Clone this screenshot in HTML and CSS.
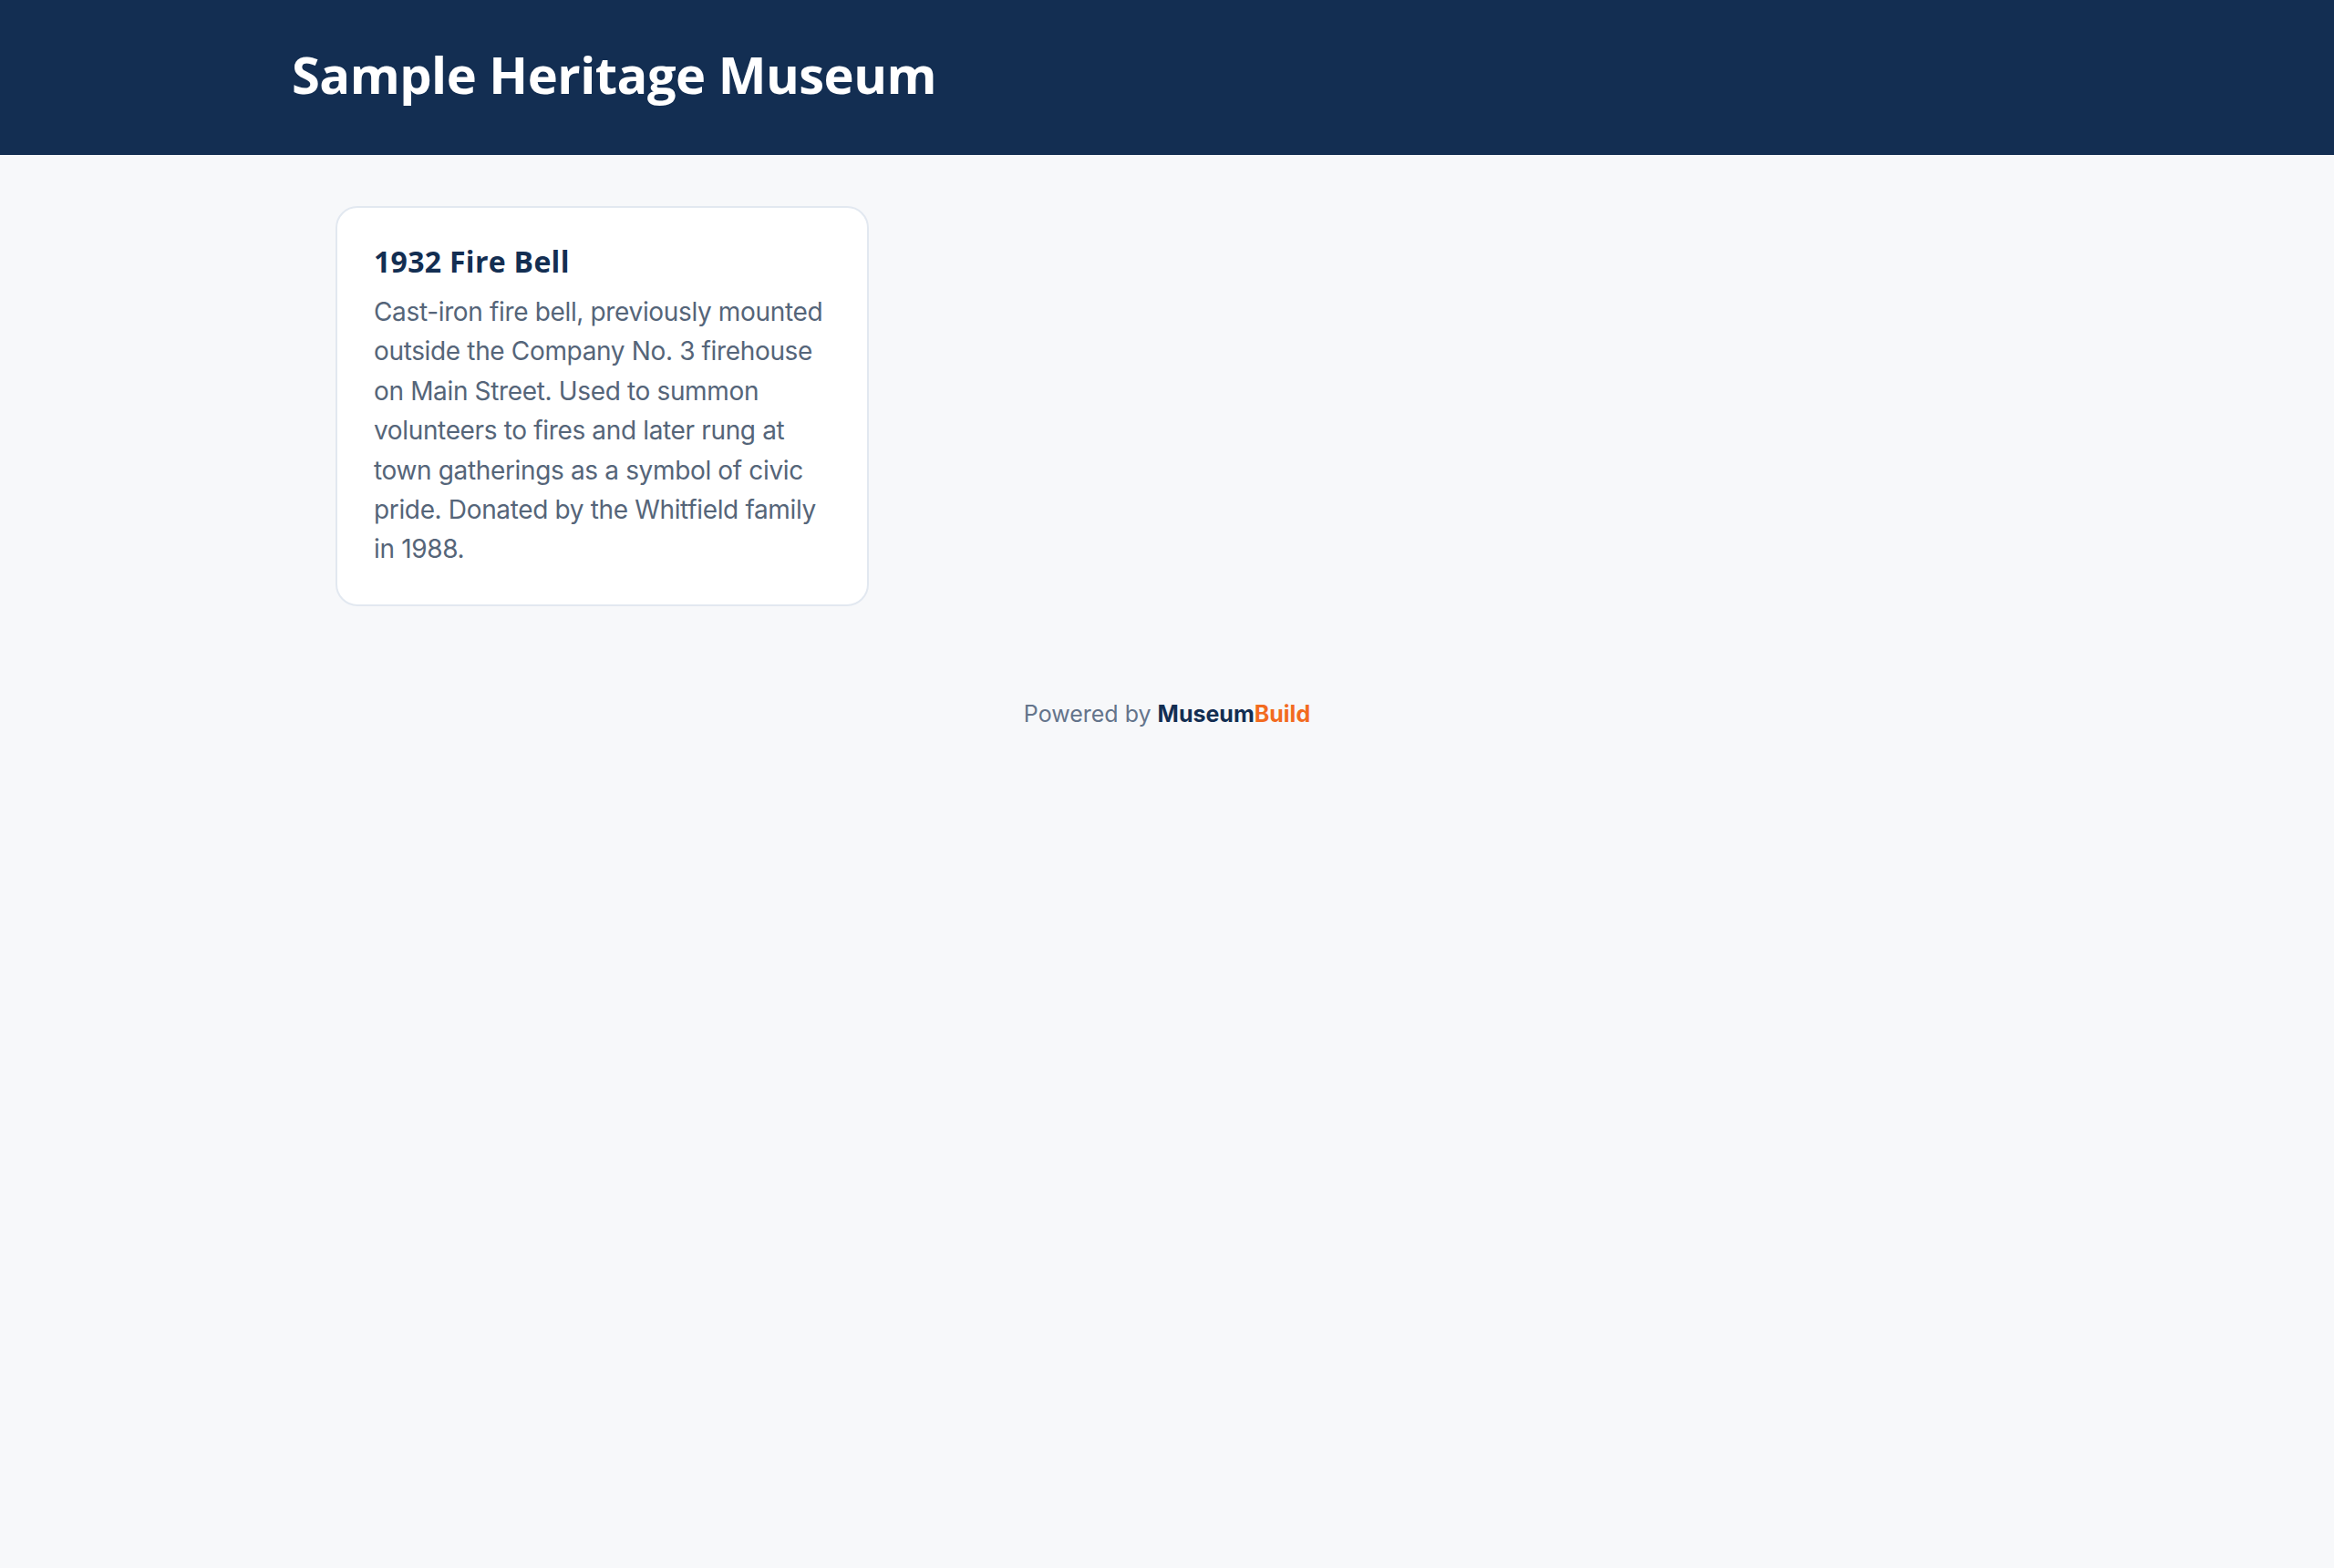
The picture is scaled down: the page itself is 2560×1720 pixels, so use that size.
FILE: index.html
```html
<!DOCTYPE html>
<html lang="en">
<head>
<meta charset="utf-8">
<title>Sample Heritage Museum</title>
<link rel="stylesheet" href="styles.css">
</head>
<body>
<header class="site-header">
  <div class="header-inner">
    <h1 class="site-title">Sample Heritage Museum</h1>
  </div>
</header>
<main class="content">
  <div class="grid">
    <article class="card">
      <h3 class="card-title">1932 Fire Bell</h3>
      <p class="card-text">Cast-iron fire bell, previously mounted outside the Company No. 3 firehouse on Main Street. Used to summon volunteers to fires and later rung at town gatherings as a symbol of civic pride. Donated by the Whitfield family in 1988.</p>
    </article>
  </div>
</main>
<footer class="site-footer">
  Powered by <span class="brand-a">Museum</span><span class="brand-b">Build</span>
</footer>
</body>
</html>
```

FILE: styles.css
```css
html, body {
  margin: 0;
  padding: 0;
}
body {
  background: #f7f8fa;
  font-family: Inter, "Noto Sans", "Liberation Sans", sans-serif;
  min-height: 1720px;
}
.site-header {
  background: #132e52;
  height: 170px;
  box-sizing: border-box;
  padding-top: 43px;
}
.header-inner {
  max-width: 1920px;
  margin: 0 auto;
}
.site-title {
  margin: 0;
  color: #ffffff;
  font-family: "Open Sans", "DejaVu Sans", sans-serif;
  font-weight: 700;
  font-size: 56px;
  line-height: 76px;
  letter-spacing: -0.5px;
}
.content {
  max-width: 1920px;
  margin: 0 auto;
  padding: 56px 48px 0;
  box-sizing: border-box;
}
.grid {
  display: grid;
  grid-template-columns: repeat(3, 585px);
  gap: 36px;
}
.card {
  background: #ffffff;
  border: 2px solid #e2e8f0;
  border-radius: 24px;
  padding: 40px 40px 38px;
}
.card-title {
  margin: 0 0 15px;
  color: #132e52;
  font-family: "Open Sans", "DejaVu Sans", sans-serif;
  font-weight: 700;
  font-size: 32px;
  line-height: 38px;
  letter-spacing: 0.3px;
}
.card-text {
  margin: 0;
  color: #556579;
  font-size: 28px;
  line-height: 43.4px;
  letter-spacing: -0.35px;
}
.site-footer {
  text-align: center;
  margin-top: 104px;
  color: #64748b;
  font-size: 25px;
  line-height: 29px;
}
.brand-a {
  color: #132e52;
  font-weight: 700;
}
.brand-b {
  color: #f26b1f;
  font-weight: 700;
}
```
